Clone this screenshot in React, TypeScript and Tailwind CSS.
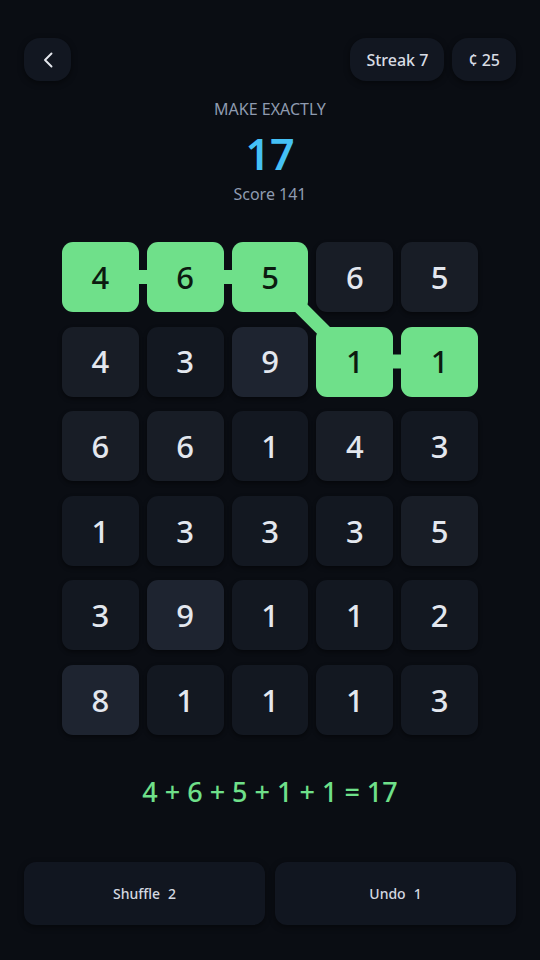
import React from "react";

const grid: number[][] = [
  [4, 6, 5, 6, 5],
  [4, 3, 9, 1, 1],
  [6, 6, 1, 4, 3],
  [1, 3, 3, 3, 5],
  [3, 9, 1, 1, 2],
  [8, 1, 1, 1, 3],
];

const selected = new Set(["0-0", "0-1", "0-2", "1-3", "1-4"]);
const path: [number, number][] = [
  [0, 0],
  [0, 1],
  [0, 2],
  [1, 3],
  [1, 4],
];

const CW = 76.8;
const CH = 70;
const GX = 8;
const GY = 14.6;

function cellBg(v: number) {
  if (v >= 8) return "bg-[#1e2430]";
  if (v >= 4) return "bg-[#181d26]";
  return "bg-[#131821]";
}

export default function App() {
  const pts = path.map(([r, c]) => [c * (CW + GX) + CW / 2, r * (CH + GY) + CH / 2]);
  const d = pts.map((p, i) => `${i === 0 ? "M" : "L"}${p[0]} ${p[1]}`).join(" ");
  return (
    <div
      className="min-h-[960px] w-full bg-[#0a0d13] px-6 pt-[38px] text-[#e2e6ee]"
      style={{ fontFamily: '"Noto Sans", "Open Sans", sans-serif' }}
    >
      <div className="flex h-[43px] items-center justify-between">
        <button className="flex h-[43px] w-[47px] items-center justify-center rounded-2xl bg-[#121721] shadow-[0_2px_6px_rgba(0,0,0,0.45)]">
          <svg width="12" height="16" viewBox="0 0 12 16" fill="none">
            <path d="M9.5 1.5 L3 8 L9.5 14.5" stroke="#e5e8ee" strokeWidth="1.9" strokeLinecap="round" strokeLinejoin="round" />
          </svg>
        </button>
        <div className="flex gap-2">
          <div className="flex h-[43px] items-center rounded-2xl bg-[#121721] px-4 text-[16px] font-medium text-[#d8dce4] shadow-[0_2px_6px_rgba(0,0,0,0.45)]">
            Streak 7
          </div>
          <div className="flex h-[43px] items-center rounded-2xl bg-[#121721] px-4 text-[16px] font-medium text-[#d8dce4] shadow-[0_2px_6px_rgba(0,0,0,0.45)]">
            ¢ 25
          </div>
        </div>
      </div>

      <div className="mt-4 flex flex-col items-center">
        <div className="text-[16px] leading-6 text-[#8f9bb0]">MAKE EXACTLY</div>
        <div className="mt-3 text-[43px] font-semibold leading-[42px] text-[#45c0f5]">17</div>
        <div className="mt-[7px] text-[16px] leading-6 text-[#8f9bb0]">Score 141</div>
      </div>

      <div className="mt-9 flex justify-center">
        <div className="relative w-[416px]">
          <svg className="absolute left-0 top-0" width="416" height="494" viewBox="0 0 416 494" fill="none">
            <path d={d} stroke="#6fe08a" strokeWidth="14" strokeLinejoin="round" />
          </svg>
          <div className="relative grid grid-cols-5 gap-x-2 gap-y-[14.6px]">
            {grid.map((row, r) =>
              row.map((v, c) => {
                const sel = selected.has(`${r}-${c}`);
                return (
                  <div
                    key={`${r}-${c}`}
                    className={
                      sel
                        ? "flex h-[70px] items-center justify-center rounded-[11px] bg-[#6fe08a] text-[31px] font-medium text-[#0c1a10]"
                        : `flex h-[70px] items-center justify-center rounded-[11px] ${cellBg(v)} text-[31px] font-medium text-[#e3e7ee] shadow-[0_2px_4px_rgba(0,0,0,0.45)]`
                    }
                  >
                    {v}
                  </div>
                );
              })
            )}
          </div>
        </div>
      </div>

      <div className="mt-[39px] text-center text-[27px] font-medium leading-9 text-[#6fe08a]">
        4 + 6 + 5 + 1 + 1 = 17
      </div>

      <div className="mt-[52px] flex gap-[10px]">
        <button className="flex h-[63px] flex-1 items-center justify-center gap-2 rounded-xl bg-[#111620] text-[14px] font-medium text-[#d4d8e0] shadow-[0_2px_6px_rgba(0,0,0,0.45)]">
          <span>Shuffle</span>
          <span>2</span>
        </button>
        <button className="flex h-[63px] flex-1 items-center justify-center gap-2 rounded-xl bg-[#111620] text-[14px] font-medium text-[#d4d8e0] shadow-[0_2px_6px_rgba(0,0,0,0.45)]">
          <span>Undo</span>
          <span>1</span>
        </button>
      </div>
    </div>
  );
}
